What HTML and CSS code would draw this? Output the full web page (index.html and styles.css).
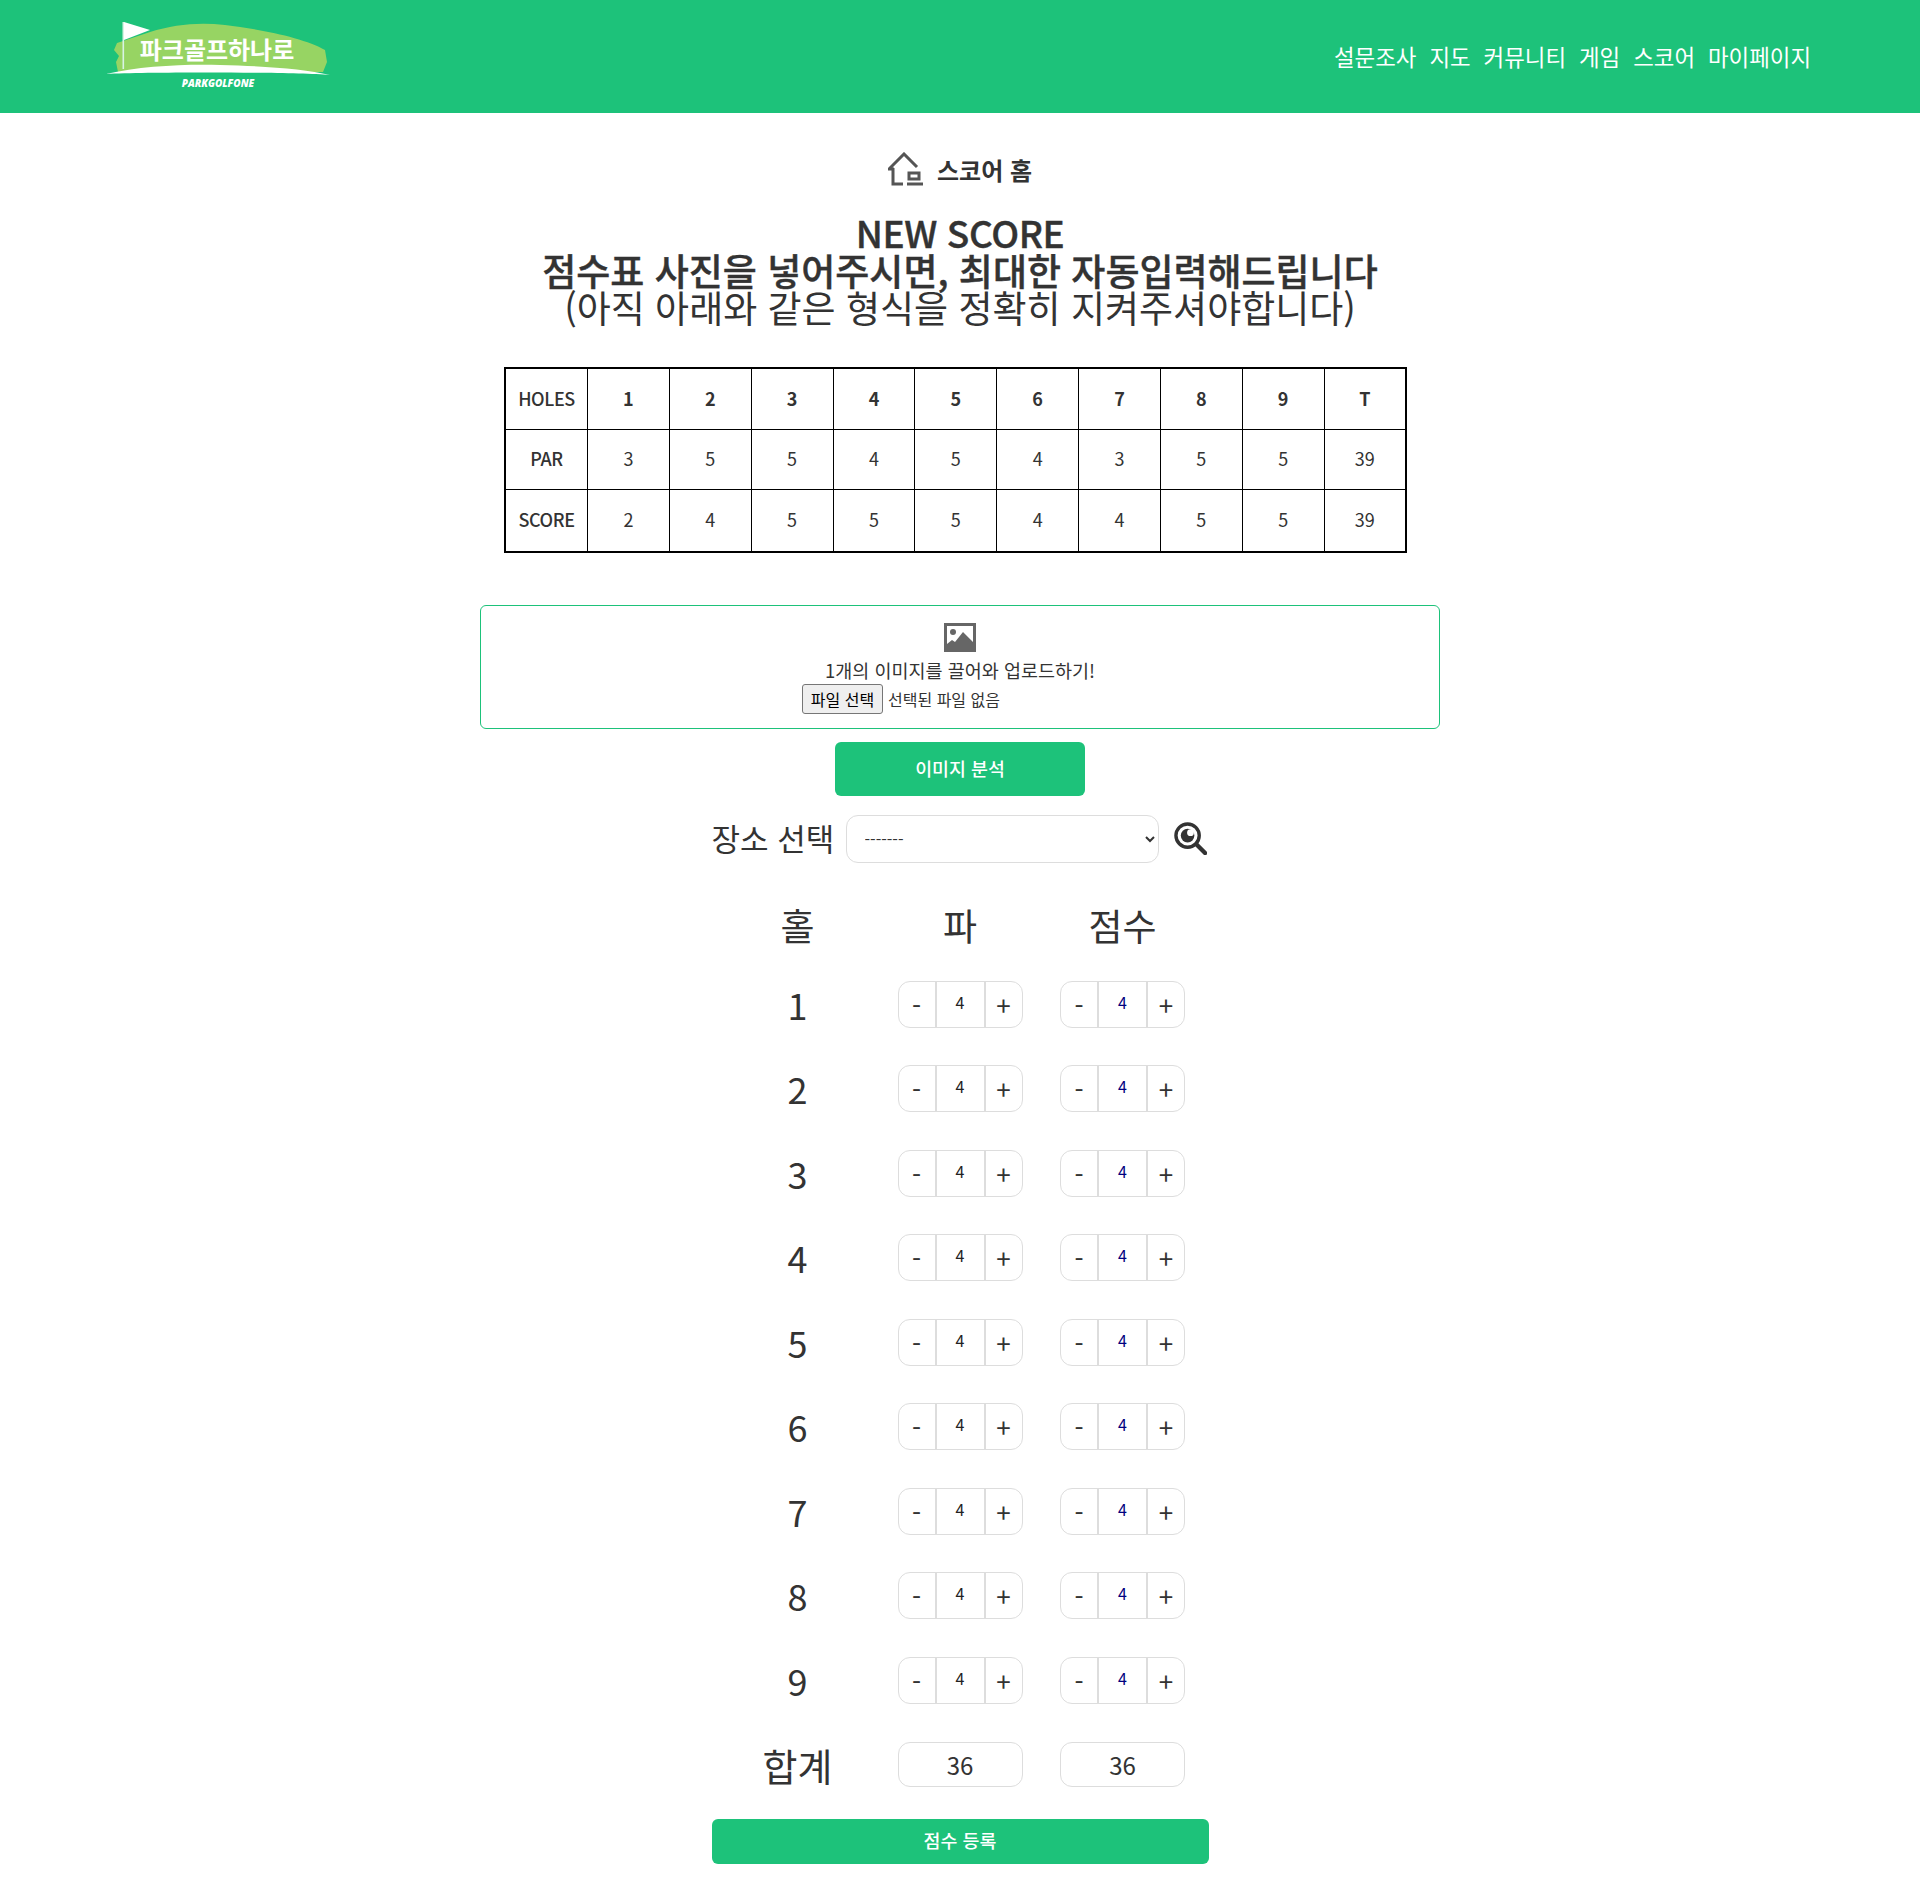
FILE: index.html
```html
<!DOCTYPE html>
<html lang="ko">

<head>
    <meta charset="UTF-8">
    <meta name="viewport" content="width=device-width, initial-scale=1.0">
    <title>파크골프하나로</title>
    <link rel="stylesheet" href="styles.css">
</head>

<body>

    <header class="topbar">
        <a class="logo" href="#">
            <svg width="224" height="72" viewBox="106 20 224 72">
                <path d="M150 32 C175 24 200 22 225 25 C260 29 305 38 325 50 L327 62 L323 72 L118 72 L116 62 L119 56 L114 50 L117 43 Z" fill="#97d463" />
                <path d="M106 74 C140 66 185 64 220 65 C265 66 305 69 330 75 C290 72 150 72 106 74 Z" fill="#fff" />
                <rect x="122.5" y="22" width="1.6" height="47" fill="#d8f3e4" />
                <path d="M124 22 L150 30 L124 40 Z" fill="#fff" />
                <text class="logo-name" x="217" y="59" text-anchor="middle">파크골프하나로</text>
                <text class="logo-sub" x="218" y="87" text-anchor="middle">PARKGOLFONE</text>
            </svg>
        </a>
        <nav class="menu">
            <a href="#">설문조사</a>
            <a href="#">지도</a>
            <a href="#">커뮤니티</a>
            <a href="#">게임</a>
            <a href="#">스코어</a>
            <a href="#">마이페이지</a>
        </nav>
    </header>

    <main class="content">
        <a class="score-home" href="#">
            <svg width="36" height="34" viewBox="0 0 36 34">
                <path d="M6 17 L1 17 L16 2 L29 15" fill="none" stroke="#555" stroke-width="3" />
                <path d="M5 16 L5 32 L15 32" fill="none" stroke="#555" stroke-width="3" />
                <path d="M21 21 H31 V27 H21 Z" fill="none" stroke="#555" stroke-width="3" />
                <path d="M19 32 H35" fill="none" stroke="#555" stroke-width="3" />
            </svg>
            <span>스코어 홈</span>
        </a>

        <h1 class="title">
            <span class="title-en">NEW SCORE</span><br>
            점수표 사진을 넣어주시면, 최대한 자동입력해드립니다<br>
            <span class="title-note">(아직 아래와 같은 형식을 정확히 지켜주셔야합니다)</span>
        </h1>

        <table class="sample">
            <tr class="strong">
                <th>HOLES</th><td>1</td><td>2</td><td>3</td><td>4</td><td>5</td><td>6</td><td>7</td><td>8</td><td>9</td><td>T</td>
            </tr>
            <tr>
                <th>PAR</th><td>3</td><td>5</td><td>5</td><td>4</td><td>5</td><td>4</td><td>3</td><td>5</td><td>5</td><td>39</td>
            </tr>
            <tr>
                <th>SCORE</th><td>2</td><td>4</td><td>5</td><td>5</td><td>5</td><td>4</td><td>4</td><td>5</td><td>5</td><td>39</td>
            </tr>
        </table>

        <div class="dropzone">
            <svg width="32" height="29" viewBox="0 0 32 29">
                <rect width="32" height="29" fill="#666" />
                <rect x="3" y="3" width="26" height="23" fill="#fff" />
                <path d="M3 26 V21 L8 17 L11 19 L19 9 L29 19 V26 Z" fill="#666" />
                <circle cx="9" cy="9" r="3" fill="#666" />
            </svg>
            <p class="drop-text">1개의 이미지를 끌어와 업로드하기!</p>
            <div class="file-row">
                <button class="file-btn" type="button">파일 선택</button>
                <span class="file-name">선택된 파일 없음</span>
            </div>
        </div>

        <button class="green-btn analyze" type="button">이미지 분석</button>

        <div class="place">
            <label for="place">장소 선택</label>
            <select id="place">
                <option>-------</option>
            </select>
            <svg width="33" height="33" viewBox="0 0 34 34">
                <circle cx="14" cy="14" r="12" fill="none" stroke="#333" stroke-width="3.5" />
                <circle cx="14" cy="14" r="7" fill="#333" />
                <circle cx="17" cy="11" r="3.5" fill="#fff" />
                <path d="M23 23 L32 32" stroke="#333" stroke-width="4.5" stroke-linecap="round" />
            </svg>
        </div>

        <div class="scores">
            <div class="head">홀</div><div class="head">파</div><div class="head">점수</div>

            <div class="hole">1</div>
            <div class="stepper"><button>-</button><span>4</span><button>+</button></div>
            <div class="stepper mine"><button>-</button><span>4</span><button>+</button></div>

            <div class="hole">2</div>
            <div class="stepper"><button>-</button><span>4</span><button>+</button></div>
            <div class="stepper mine"><button>-</button><span>4</span><button>+</button></div>

            <div class="hole">3</div>
            <div class="stepper"><button>-</button><span>4</span><button>+</button></div>
            <div class="stepper mine"><button>-</button><span>4</span><button>+</button></div>

            <div class="hole">4</div>
            <div class="stepper"><button>-</button><span>4</span><button>+</button></div>
            <div class="stepper mine"><button>-</button><span>4</span><button>+</button></div>

            <div class="hole">5</div>
            <div class="stepper"><button>-</button><span>4</span><button>+</button></div>
            <div class="stepper mine"><button>-</button><span>4</span><button>+</button></div>

            <div class="hole">6</div>
            <div class="stepper"><button>-</button><span>4</span><button>+</button></div>
            <div class="stepper mine"><button>-</button><span>4</span><button>+</button></div>

            <div class="hole">7</div>
            <div class="stepper"><button>-</button><span>4</span><button>+</button></div>
            <div class="stepper mine"><button>-</button><span>4</span><button>+</button></div>

            <div class="hole">8</div>
            <div class="stepper"><button>-</button><span>4</span><button>+</button></div>
            <div class="stepper mine"><button>-</button><span>4</span><button>+</button></div>

            <div class="hole">9</div>
            <div class="stepper"><button>-</button><span>4</span><button>+</button></div>
            <div class="stepper mine"><button>-</button><span>4</span><button>+</button></div>

            <div class="hole sum">합계</div>
            <div class="total">36</div>
            <div class="total">36</div>
        </div>

        <button class="green-btn submit" type="button">점수 등록</button>
    </main>

</body>

</html>
```

FILE: styles.css
```css
body {
    margin: 0;
    font-family: "Noto Sans CJK KR", "Noto Sans", sans-serif;
    background-color: #fff;
    color: #333;
}

a {
    color: inherit;
    text-decoration: none;
}

.topbar {
    display: flex;
    align-items: flex-start;
    justify-content: space-between;
    height: 113px;
    padding: 20px 109px 0 106px;
    background-color: #1dc27a;
    box-sizing: border-box;
}

.logo {
    display: block;
    height: 72px;
}

.logo-name {
    font-size: 24px;
    font-weight: 700;
    fill: #fff;
}

.logo-sub {
    font-family: "Open Sans", sans-serif;
    font-size: 10px;
    font-weight: 800;
    font-style: italic;
    fill: #fff;
}

.menu {
    display: flex;
    gap: 13px;
    margin-top: 20px;
    font-size: 22.4px;
    line-height: 32px;
    color: #fff;
}

.content {
    display: flex;
    flex-direction: column;
    align-items: center;
    padding-bottom: 34px;
}

.score-home {
    display: flex;
    align-items: center;
    gap: 13px;
    height: 36px;
    margin-top: 38px;
    font-size: 24px;
    font-weight: 700;
}

.title {
    margin: 27px 0 0;
    font-size: 37px;
    font-weight: 500;
    line-height: 37.5px;
    text-align: center;
    -webkit-text-stroke: 0.4px #333;
}

.title-en {
    letter-spacing: -0.4px;
}

.title-note {
    font-weight: 400;
    -webkit-text-stroke: 0;
}

.sample {
    width: 903px;
    height: 186px;
    margin: 40px 9px 0 0;
    border-collapse: collapse;
    border: 2px solid #000;
    table-layout: fixed;
    font-size: 18px;
}

.sample th,
.sample td {
    border: 1px solid #000;
    padding: 0 0 2px;
    text-align: center;
    font-weight: 400;
}

.sample th {
    width: 81px;
    font-weight: 500;
    letter-spacing: -0.4px;
}

.sample .strong td {
    font-weight: 700;
}

.dropzone {
    display: flex;
    flex-direction: column;
    align-items: center;
    width: 960px;
    height: 124px;
    margin-top: 52px;
    padding-top: 17px;
    border: 1px solid #1dc27a;
    border-radius: 6px;
    box-sizing: border-box;
}

.drop-text {
    margin: 5px 0 0;
    font-size: 18.5px;
    line-height: 26px;
}

.file-row {
    display: flex;
    align-items: center;
    gap: 5px;
    width: 316px;
    margin-top: 1px;
}

.file-btn {
    width: 81px;
    height: 30px;
    padding: 0;
    border: 1px solid #767676;
    border-radius: 3px;
    background-color: #efefef;
    font-family: inherit;
    font-size: 16px;
    color: #000;
}

.file-name {
    font-size: 16px;
}

.green-btn {
    padding: 0 0 2px;
    border: none;
    border-radius: 6px;
    background-color: #1dc27a;
    color: #fff;
    font-family: inherit;
    font-size: 18.4px;
    font-weight: 500;
}

.analyze {
    width: 250px;
    height: 54px;
    margin-top: 13px;
}

.place {
    display: flex;
    align-items: center;
    height: 48px;
    margin: 19px 2px 0 0;
    font-size: 31px;
}

.place label {
    width: 120px;
    padding-bottom: 2px;
    white-space: nowrap;
}

.place select {
    width: 313px;
    height: 48px;
    margin: 0 15px 0 14px;
    padding-left: 14px;
    border: 1px solid #ddd;
    border-radius: 12px;
    background-color: #fff;
    font-family: inherit;
    font-size: 16px;
    color: #333;
}

.scores {
    display: grid;
    grid-template-columns: repeat(3, 162.5px);
    grid-template-rows: 74px;
    grid-auto-rows: 84.5px;
    justify-content: center;
    justify-items: center;
    align-items: center;
    margin-top: 25px;
    font-size: 36px;
}

.head {
    font-size: 37px;
    line-height: 74px;
}

.sum {
    font-size: 38px;
}

.stepper {
    display: grid;
    grid-template-columns: 36px 51px 36px;
    align-items: center;
    width: 125px;
    height: 47px;
    margin-top: 1px;
    border: 1px solid #ddd;
    border-radius: 12px;
    box-sizing: border-box;
    text-align: center;
}

.stepper button {
    height: 45px;
    padding: 0;
    border: none;
    background: none;
    font-family: inherit;
    font-size: 26px;
    color: #333;
}

.stepper span {
    height: 45px;
    border-left: 2px solid #ddd;
    border-right: 2px solid #ddd;
    box-sizing: border-box;
    font-size: 16px;
    line-height: 40px;
    color: #222;
}

.stepper.mine span {
    color: #000080;
}

.total {
    width: 125px;
    height: 45px;
    border: 1px solid #ddd;
    border-radius: 12px;
    box-sizing: border-box;
    font-size: 24px;
    line-height: 43px;
    text-align: center;
}

.submit {
    width: 497px;
    height: 45px;
    margin-top: 12px;
}
```
